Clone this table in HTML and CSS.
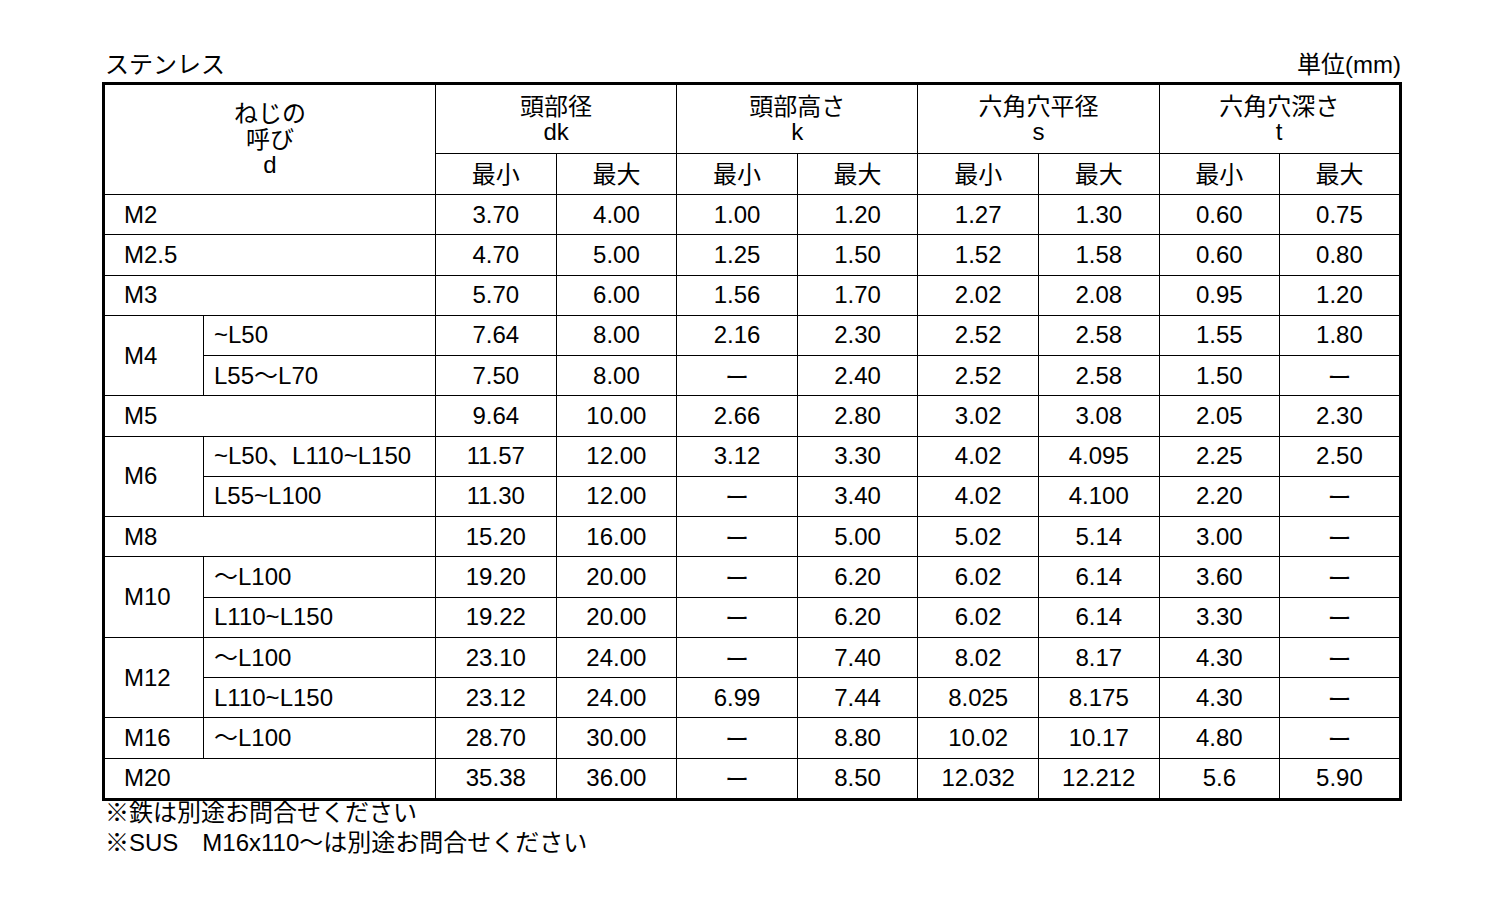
FILE: index.html
```html
<!DOCTYPE html>
<html lang="ja">
<head>
<meta charset="utf-8">
<title>ステンレス</title>
<link rel="stylesheet" href="styles.css">
</head>
<body>
<div class="page">
  <div class="topline">
    <span class="title">ステンレス</span>
    <span class="unit">単位(mm)</span>
  </div>
  <table class="spec">
    <colgroup>
      <col class="c-d"><col class="c-l">
      <col class="c-n"><col class="c-n"><col class="c-n"><col class="c-n">
      <col class="c-n"><col class="c-n"><col class="c-n"><col class="c-n">
    </colgroup>
    <thead>
      <tr class="h1">
        <th colspan="2" rowspan="2" class="hd">ねじの<br>呼び<br>d</th>
        <th colspan="2">頭部径<br>dk</th>
        <th colspan="2">頭部高さ<br>k</th>
        <th colspan="2">六角穴平径<br>s</th>
        <th colspan="2">六角穴深さ<br>t</th>
      </tr>
      <tr class="h2">
        <th>最小</th><th>最大</th><th>最小</th><th>最大</th>
        <th>最小</th><th>最大</th><th>最小</th><th>最大</th>
      </tr>
    </thead>
    <tbody>
      <tr><td colspan="2" class="m">M2</td><td>3.70</td><td>4.00</td><td>1.00</td><td>1.20</td><td>1.27</td><td>1.30</td><td>0.60</td><td>0.75</td></tr>
      <tr><td colspan="2" class="m">M2.5</td><td>4.70</td><td>5.00</td><td>1.25</td><td>1.50</td><td>1.52</td><td>1.58</td><td>0.60</td><td>0.80</td></tr>
      <tr><td colspan="2" class="m">M3</td><td>5.70</td><td>6.00</td><td>1.56</td><td>1.70</td><td>2.02</td><td>2.08</td><td>0.95</td><td>1.20</td></tr>
      <tr><td rowspan="2" class="m">M4</td><td class="l">~L50</td><td>7.64</td><td>8.00</td><td>2.16</td><td>2.30</td><td>2.52</td><td>2.58</td><td>1.55</td><td>1.80</td></tr>
      <tr><td class="l">L55～L70</td><td>7.50</td><td>8.00</td><td class="dash">ー</td><td>2.40</td><td>2.52</td><td>2.58</td><td>1.50</td><td class="dash">ー</td></tr>
      <tr><td colspan="2" class="m">M5</td><td>9.64</td><td>10.00</td><td>2.66</td><td>2.80</td><td>3.02</td><td>3.08</td><td>2.05</td><td>2.30</td></tr>
      <tr><td rowspan="2" class="m">M6</td><td class="l">~L50、L110~L150</td><td>11.57</td><td>12.00</td><td>3.12</td><td>3.30</td><td>4.02</td><td>4.095</td><td>2.25</td><td>2.50</td></tr>
      <tr><td class="l">L55~L100</td><td>11.30</td><td>12.00</td><td class="dash">ー</td><td>3.40</td><td>4.02</td><td>4.100</td><td>2.20</td><td class="dash">ー</td></tr>
      <tr><td colspan="2" class="m">M8</td><td>15.20</td><td>16.00</td><td class="dash">ー</td><td>5.00</td><td>5.02</td><td>5.14</td><td>3.00</td><td class="dash">ー</td></tr>
      <tr><td rowspan="2" class="m">M10</td><td class="l">～L100</td><td>19.20</td><td>20.00</td><td class="dash">ー</td><td>6.20</td><td>6.02</td><td>6.14</td><td>3.60</td><td class="dash">ー</td></tr>
      <tr><td class="l">L110~L150</td><td>19.22</td><td>20.00</td><td class="dash">ー</td><td>6.20</td><td>6.02</td><td>6.14</td><td>3.30</td><td class="dash">ー</td></tr>
      <tr><td rowspan="2" class="m">M12</td><td class="l">～L100</td><td>23.10</td><td>24.00</td><td class="dash">ー</td><td>7.40</td><td>8.02</td><td>8.17</td><td>4.30</td><td class="dash">ー</td></tr>
      <tr><td class="l">L110~L150</td><td>23.12</td><td>24.00</td><td>6.99</td><td>7.44</td><td>8.025</td><td>8.175</td><td>4.30</td><td class="dash">ー</td></tr>
      <tr><td class="m">M16</td><td class="l">～L100</td><td>28.70</td><td>30.00</td><td class="dash">ー</td><td>8.80</td><td>10.02</td><td>10.17</td><td>4.80</td><td class="dash">ー</td></tr>
      <tr><td colspan="2" class="m">M20</td><td>35.38</td><td>36.00</td><td class="dash">ー</td><td>8.50</td><td>12.032</td><td>12.212</td><td>5.6</td><td>5.90</td></tr>
    </tbody>
  </table>
  <div class="notes">
    <p>※鉄は別途お問合せください</p>
    <p>※SUS　M16x110～は別途お問合せください</p>
  </div>
</div>
</body>
</html>
```

FILE: styles.css
```css
html, body {
  margin: 0;
  padding: 0;
  background: #fff;
}
body {
  font-family: "Liberation Sans", "Noto Sans CJK JP", sans-serif;
  font-size: 24px;
  color: #000;
}
.page {
  width: 1299px;
  margin-left: 102px;
  padding-top: 50px;
}
.topline {
  display: flex;
  justify-content: space-between;
  align-items: center;
  height: 30px;
  line-height: 30px;
  margin-bottom: 2px;
}
.title { padding-left: 3px; }
.spec {
  border-collapse: collapse;
  table-layout: fixed;
  width: 1297px;
  border: 3px solid #000;
}
.c-d { width: 100px; }
.c-l { width: 232px; }
.c-n { width: 120.6px; }
.spec th, .spec td {
  border: 1px solid #000;
  padding: 0;
  text-align: center;
  vertical-align: middle;
  font-weight: normal;
  white-space: nowrap;
}
.h1 th {
  height: 68px;
  line-height: 25px;
}
.h2 th {
  height: 40px;
  line-height: 25px;
}
.spec th.hd { line-height: 25.5px; }
.spec tbody td {
  height: 39.27px;
  line-height: 26px;
}
.spec td.m {
  text-align: left;
  padding-left: 19px;
}
.spec td.l {
  text-align: left;
  padding-left: 10px;
}
.spec td.dash {
  font-family: "Noto Sans CJK JP", sans-serif;
}
.notes {
  margin-top: -3px;
  padding-left: 3px;
}
.notes p {
  margin: 0;
  line-height: 30px;
}
```
